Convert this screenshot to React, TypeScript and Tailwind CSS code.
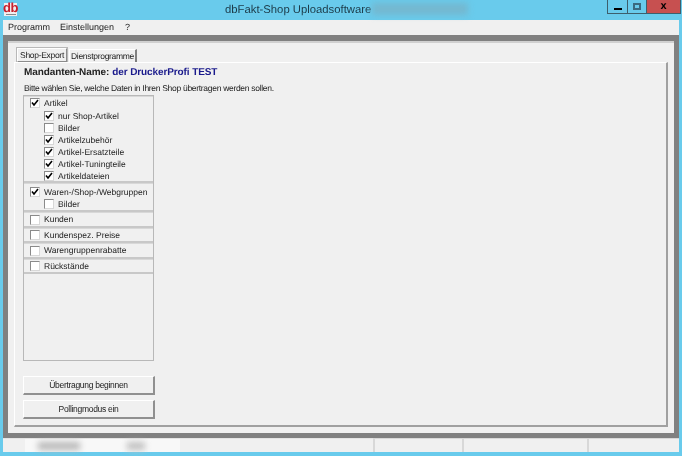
const Check = ({ checked, label, indent }: { checked?: boolean; label: string; indent?: boolean }) => (
  <div className={`flex h-3 items-center gap-[4px] ${indent ? "pl-[20px]" : "pl-[6px]"}`}>
    <span className="flex h-[10px] w-[10px] shrink-0 items-center justify-center border border-t-[#8a8a8a] border-l-[#8a8a8a] border-r-[#d8d8d8] border-b-[#d8d8d8] bg-white">
      {checked && (
        <svg width="8" height="8" viewBox="0 0 8 8">
          <path d="M1 3.5 L3 6 L7 1" fill="none" stroke="#000" strokeWidth="1.6" />
        </svg>
      )}
    </span>
    <span className="whitespace-nowrap">{label}</span>
  </div>
);

const Group = ({ className, children }: { className: string; children: React.ReactNode }) => (
  <div className={`border-b-2 border-[#c8c8c8] border-t border-t-[#d8d8d8] ${className}`}>{children}</div>
);

const Button = ({ label }: { label: string }) => (
  <button
    type="button"
    className="h-[19px] w-[132px] border border-t-white border-l-white border-r-2 border-b-2 border-r-[#909090] border-b-[#909090] bg-[#f0f0f0] text-center text-[8.5px] tracking-[-0.3px] text-[#222]"
  >
    {label}
  </button>
);

export default function App() {
  return (
    <div className="flex h-[456px] w-[682px] flex-col overflow-hidden bg-[#69cbec] font-['Liberation_Sans',sans-serif] text-[8.5px] text-[#222] blur-[0.3px] [text-rendering:geometricPrecision]">
      {/* title bar */}
      <div className="relative flex h-5 shrink-0 items-start pl-[4px] pt-[3px]">
        <div className="flex h-[13px] w-[13px] flex-col items-center bg-[#f2eef0]">
          <span className="h-[10px] text-[13px] font-bold leading-[10px] tracking-[-0.5px] text-[#c8202c]">db</span>
          <span className="mt-[1px] h-[1px] w-[10px] bg-[#8a8a8a]" />
        </div>
        <div className="ml-[208px] text-[11.3px] leading-[14px] text-[#1c3a48]">
          dbFakt-Shop Uploadsoftware
        </div>
        <div className="absolute left-[372px] top-[3px] h-3 w-[96px] bg-[#74b8d0] blur-[3px]" />
        <div className="absolute right-[1px] top-0 flex h-[14px] border border-t-0 border-[#3d5f6d]">
          <div className="flex w-[20px] items-end justify-center border-r border-[#3d5f6d] pb-[3px]">
            <div className="h-[2px] w-2 bg-black" />
          </div>
          <div className="flex w-[19px] items-center justify-center border-r border-[#3d5f6d]">
            <div className="h-[7px] w-[8px] border-2 border-[#3a6a80]" />
          </div>
          <div className="flex w-[33px] items-center justify-center bg-[#c75050] text-[11px] font-bold leading-none text-black">
            x
          </div>
        </div>
      </div>

      {/* window body */}
      <div className="mx-[3px] flex min-h-0 flex-1 flex-col">
        <div className="flex h-[15px] shrink-0 items-center gap-[10px] bg-[#f0f0f0] pl-[5px] text-[9px]">
          <span>Programm</span>
          <span>Einstellungen</span>
          <span className="ml-[1px]">?</span>
        </div>

        <div className="flex min-h-0 flex-1 flex-col border-t-[6px] border-x-[5px] border-b-[5px] border-[#808080]">
          <div className="flex min-h-0 flex-1 flex-col border-t-2 border-t-[#d0d0d0] bg-[#f0f0f0] px-[6px] pt-[4px] pb-[6px]">
            {/* tabs */}
            <div className="flex h-[15px] shrink-0 items-end pl-[3px] tracking-[-0.3px]">
              <div className="flex h-[14px] w-[50px] items-center justify-center whitespace-nowrap border border-[#8c8c8c] border-t-white border-l-white bg-[#f0f0f0] outline-1 outline-[#b8b8b8]">
                Shop-Export
              </div>
              <div className="ml-[2px] flex h-[13px] w-[68px] items-center justify-center whitespace-nowrap border-t border-l border-t-white border-l-white border-r-2 border-r-[#808080]">
                Dienstprogramme
              </div>
            </div>

            {/* tab page */}
            <div className="flex min-h-0 flex-1 flex-col border-t border-t-white border-r-2 border-r-[#a0a0a0] border-b-2 border-b-[#a0a0a0] border-l border-l-white pl-[8px] pt-[3px]">
              <div className="flex h-3 items-center gap-[3px] pl-[1px] text-[10px] font-bold tracking-[-0.1px] text-[#222]">
                <span>Mandanten-Name:</span>
                <span className="text-[#1a1a8c]">der DruckerProfi TEST</span>
              </div>
              <div className="mt-[4px] h-3 whitespace-nowrap pl-[1px] leading-3 tracking-[-0.3px]">
                Bitte wählen Sie, welche Daten in Ihren Shop übertragen werden sollen.
              </div>

              {/* option list */}
              <div className="mt-[1px] flex h-[266px] w-[131px] flex-col border border-[#b8b8b8]">
                <Group className="flex h-[87px] flex-col">
                  <Check checked label="Artikel" />
                  <div className="flex flex-col pt-[1px]">
                    <Check checked indent label="nur Shop-Artikel" />
                    <Check indent label="Bilder" />
                    <Check checked indent label="Artikelzubehör" />
                    <Check checked indent label="Artikel-Ersatzteile" />
                    <Check checked indent label="Artikel-Tuningteile" />
                    <Check checked indent label="Artikeldateien" />
                  </div>
                </Group>
                <Group className="flex h-[29px] flex-col pt-[2px]">
                  <Check checked label="Waren-/Shop-/Webgruppen" />
                  <Check indent label="Bilder" />
                </Group>
                <Group className="flex h-[16px] items-center"><Check label="Kunden" /></Group>
                <Group className="flex h-[15px] items-center"><Check label="Kundenspez. Preise" /></Group>
                <Group className="flex h-[16px] items-center"><Check label="Warengruppenrabatte" /></Group>
                <Group className="flex h-[15px] items-center"><Check label="Rückstände" /></Group>
              </div>

              <div className="mt-auto mb-[6px] flex flex-col gap-[5px]">
                <Button label="Übertragung beginnen" />
                <Button label="Pollingmodus ein" />
              </div>
            </div>
          </div>
        </div>

        {/* status bar */}
        <div className="flex h-[14px] shrink-0 bg-[#f0f0f0]">
          <div className="relative w-[370px] border-t border-[#e4e4e4]">
            <div className="absolute left-[22px] top-0 h-[13px] w-[155px] bg-[#f8f8f8]" />
            <div className="absolute left-[35px] top-[3px] h-2 w-[42px] bg-[#b8b8b8] blur-[3px]" />
            <div className="absolute left-[124px] top-[3px] h-2 w-[18px] bg-[#c0c0c0] blur-[3px]" />
          </div>
          <div className="w-[89px] border-l-2 border-t border-[#d8d8d8]" />
          <div className="w-[125px] border-l-2 border-t border-[#d8d8d8]" />
          <div className="flex-1 border-l-2 border-t border-[#d8d8d8]" />
        </div>
        <div className="h-1 shrink-0" />
      </div>
    </div>
  );
}
